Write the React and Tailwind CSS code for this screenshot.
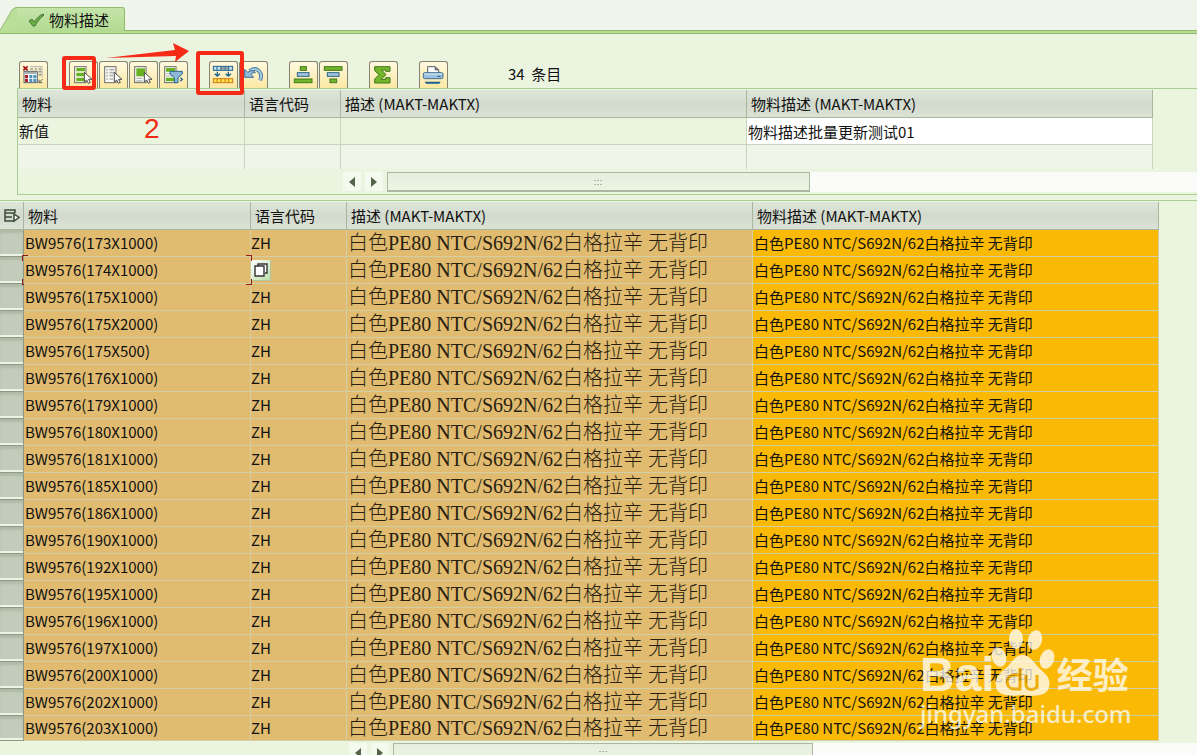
import React from "react";

const CODES = [
  "173X1000", "174X1000", "175X1000", "175X2000", "175X500", "176X1000", "179X1000",
  "180X1000", "181X1000", "185X1000", "186X1000", "190X1000", "192X1000", "195X1000",
  "196X1000", "197X1000", "200X1000", "202X1000", "203X1000",
];
const DESCRIPTION = "白色PE80 NTC/S692N/62白格拉辛 无背印";

function Pointer() {
  return <path d="M46 34v29l7-6 5 10 6-3-5-9h10z" fill="#fff" stroke="#4d4d4d" strokeWidth="3" />;
}

function Sheet() {
  return <rect x="17" y="17" width="34" height="48" fill="#fbfbf8" stroke="#6d6d66" strokeWidth="3" />;
}

function LayoutIcon() {
  return (
    <>
      <path d="M34 17h35v32" fill="none" stroke="#b3b3ac" strokeWidth="3" />
      <path d="M34 24h8m5 0h7m5 0h7M59 32h8m-8 9h8" stroke="#96968f" strokeWidth="5" />
      <path d="M13 16l13 12m0-12L13 28" stroke="#a51218" strokeWidth="5" />
      <rect x="15" y="31" width="40" height="34" fill="#fff" stroke="#5d6468" strokeWidth="3" />
      <path d="M17 36h36" stroke="#a3adb2" strokeWidth="6" />
      <path d="M18 42h9v9h-9zm0 11h9v10h-9z" fill="#ad2027" />
      <path d="M31 42h9v9h-9zm0 11h9v10h-9zM43 42h9v9h-9zm0 11h9v10h-9z" fill="#4d91bd" />
      <path d="M71 54L60 65m0-9v9h10" fill="none" stroke="#5b5f5c" strokeWidth="3" />
    </>
  );
}

function SelectAllIcon() {
  return (
    <>
      <Sheet />
      <path d="M22 21h26v10H22zm0 14h26v11H22zm0 15h26v11H22z" fill="#68b221" />
      <Pointer />
    </>
  );
}

function DeselectIcon() {
  return (
    <>
      <Sheet />
      <path d="M22 26h5m4 0h16M22 35h5m4 0h16M22 44h5m4 0h12M22 54h5m4 0h12" stroke="#b2b4ae" strokeWidth="5" />
      <Pointer />
    </>
  );
}

function SelectBlockIcon() {
  return (
    <>
      <Sheet />
      <path d="M22 22h26v24H22z" fill="#68b221" />
      <path d="M22 52h18m-18 8h18" stroke="#b2b4ae" strokeWidth="4" />
      <Pointer />
    </>
  );
}

function FilterIcon() {
  return (
    <>
      <Sheet />
      <path d="M21 21h27v11H21zm0 29h27v11H21z" fill="#68b221" />
      <path d="M20 38h20m-20 7h20" stroke="#b2b4ae" strokeWidth="3" />
      <path d="M33 31h37v8L57 50v15H46V50L33 39z" fill="#8fb9d8" stroke="#286690" strokeWidth="3" />
      <path d="M64 50l6 5-6 6" fill="none" stroke="#286690" strokeWidth="4" />
    </>
  );
}

function MassChangeIcon() {
  return (
    <>
      <rect x="13" y="16" width="58" height="12" fill="#bcdcf0" stroke="#25648f" strokeWidth="3" />
      <path d="M35 18h10v8H35zm12 0h10v8H47z" fill="#9a9d9c" />
      <path d="M24 16v12m12-12v12m12-12v12m11-12v12" stroke="#25648f" strokeWidth="3" />
      <path d="M25 32v12m-8-6l8 7 8-7M58 32v12m-8-6l8 7 8-7" fill="none" stroke="#1d638f" strokeWidth="4" />
      <rect x="13" y="53" width="58" height="12" fill="#ffe34d" stroke="#cf7715" strokeWidth="3" />
      <path d="M24 53v12m12-12v12m12-12v12m11-12v12" stroke="#cf7715" strokeWidth="3" />
    </>
  );
}

function UndoIcon() {
  return (
    <>
      <path d="M32 30c20-16 42 5 31 28" fill="none" stroke="#3c7195" strokeWidth="11" />
      <path d="M32 30c20-16 42 5 31 28" fill="none" stroke="#a6cbe5" strokeWidth="6" />
      <path d="M17 25v24h27l-8-9c4-4 8-6 13-5-3-7-13-8-23-1z" fill="#91bad8" stroke="#3c7195" strokeWidth="3" />
    </>
  );
}

function SortAscendingIcon() {
  return (
    <g strokeWidth="3">
      <rect x="34" y="17" width="18" height="11" fill="#75b52b" stroke="#3e781d" />
      <rect x="25" y="35" width="35" height="11" fill="#9fc6df" stroke="#2d6383" />
      <rect x="16" y="54" width="53" height="11" fill="#75b52b" stroke="#3e781d" />
    </g>
  );
}

function SortDescendingIcon() {
  return (
    <g strokeWidth="3">
      <rect x="16" y="17" width="53" height="11" fill="#75b52b" stroke="#3e781d" />
      <rect x="25" y="35" width="35" height="11" fill="#9fc6df" stroke="#2d6383" />
      <rect x="33" y="54" width="20" height="11" fill="#75b52b" stroke="#3e781d" />
    </g>
  );
}

function SumIcon() {
  return (
    <path
      d="M17 17h46v14H50v-4H38l13 14-15 14h14v-5h13v16H17V54l13-13-13-12z"
      fill="#75b52b" stroke="#3e781d" strokeWidth="3"
    />
  );
}

function PrintIcon() {
  return (
    <>
      <path d="M26 38V17h22l11 9v12" fill="#fff" stroke="#535c61" strokeWidth="3" />
      <path d="M48 17v10h11" fill="#767b7c" stroke="#535c61" strokeWidth="2" />
      <rect x="13" y="35" width="59" height="18" rx="4" fill="#9dc2df" stroke="#427090" strokeWidth="3" />
      <path d="M16 39h53" stroke="#d7e9f5" strokeWidth="3" />
      <path d="M55 46h10" stroke="#265d85" strokeWidth="3" />
      <path d="M17 62h48l-4 6H21z" fill="#165f90" />
    </>
  );
}

const TOOL_GROUPS = [
  [["布局", LayoutIcon]],
  [["全选", SelectAllIcon], ["取消全选", DeselectIcon], ["选择块", SelectBlockIcon], ["过滤", FilterIcon]],
  [["执行批量更改", MassChangeIcon], ["撤销", UndoIcon]],
  [["升序", SortAscendingIcon], ["降序", SortDescendingIcon]],
  [["总计", SumIcon]],
  [["打印", PrintIcon]],
];

function ToolButton({ label, Icon }) {
  return (
    <button
      type="button"
      aria-label={label}
      className="h-[27px] w-[29px] rounded-t-[3px] border border-b-0 border-[#85826f] bg-linear-to-b from-[#fff9df] to-[#fbe8a2]"
    >
      <svg viewBox="3 3 87 81" className="block h-[27px] w-[29px]"><Icon /></svg>
    </button>
  );
}

function Toolbar() {
  return (
    <div className="relative z-10 flex h-[54px] shrink-0 items-end pl-[19px]">
      <div className="flex gap-[21px]">
        {TOOL_GROUPS.map((group, i) => (
          <div key={i} className="flex gap-px">
            {group.map(([label, Icon]) => <ToolButton key={label} label={label} Icon={Icon} />)}
          </div>
        ))}
      </div>
      <span className="ml-[60px] h-[26px] leading-6">34&nbsp; 条目</span>
      <svg viewBox="0 0 84 22" className="absolute top-2 left-[105px] h-[22px] w-[84px]">
        <path d="M1 16L70 8 68 1l16 8-14 11 1-6-35 1z" fill="#f52a17" />
      </svg>
      <span className="absolute top-[22px] left-[62px] h-[34px] w-[34px] rounded-[3px] border-4 border-[#f52a17]" />
      <span className="absolute top-[17px] left-[196px] h-11 w-12 rounded-[3px] border-4 border-[#f52a17]" />
    </div>
  );
}

function HeadCell({ children }) {
  return (
    <th className="h-7 border-r border-b border-[#a9b59f] bg-linear-to-b from-[#dfe6da] via-[#d2d9cd] to-[#dbe3d5] px-1 py-0 text-left font-normal whitespace-nowrap">
      {children}
    </th>
  );
}

function Columns() {
  return (
    <>
      <col className="w-24" />
      <col className="w-[406px]" />
      <col className="w-[406px]" />
    </>
  );
}

function Scrollbar({ className, thumb }) {
  return (
    <div className={className}>
      <button type="button" aria-label="向左滚动" className="grid h-[19px] w-[18px] shrink-0 place-items-center bg-[#f5faef]">
        <svg viewBox="0 0 6 10" className="h-2.5 w-1.5"><path d="M6 0v10L0 5z" fill="#536449" /></svg>
      </button>
      <button type="button" aria-label="向右滚动" className="ml-1 grid h-[19px] w-[18px] shrink-0 place-items-center bg-[#f5faef]">
        <svg viewBox="0 0 6 10" className="h-2.5 w-1.5"><path d="M0 0v10l6-5z" fill="#536449" /></svg>
      </button>
      <div className="ml-1 flex h-5 flex-1 bg-[#fbfcfa]">
        <div className={thumb}>
          <svg viewBox="0 0 9 6" className="h-1.5 w-[9px]" fill="#acb8a2">
            <path d="M0 1h2v1H0zm3 0h2v1H3zm3 0h2v1H6zM0 5h2v1H0zm3 0h2v1H3zm3 0h2v1H6z" />
          </svg>
        </div>
      </div>
    </div>
  );
}

function ChangePanel() {
  const cell = "h-[27px] border-r border-b border-[#c8d4bc] p-0";
  const blank = "h-6 border-r border-[#c8d4bc] bg-[#eff5e9] p-0";
  return (
    <section className="relative ml-[17px] shrink-0 border-y border-l border-[#a8ce91] pt-px">
      <table className="w-[1135px] table-fixed border-separate border-spacing-0">
        <colgroup><col className="w-[227px]" /><Columns /></colgroup>
        <thead>
          <tr>
            <HeadCell>物料</HeadCell>
            <HeadCell>语言代码</HeadCell>
            <HeadCell>描述 (MAKT-MAKTX)</HeadCell>
            <HeadCell>物料描述 (MAKT-MAKTX)</HeadCell>
          </tr>
        </thead>
        <tbody>
          <tr>
            <td className={cell}><span className="pl-px">新值</span></td>
            <td className={cell} />
            <td className={cell} />
            <td className={cell}>
              <input aria-label="物料描述新值" defaultValue="物料描述批量更新测试01" className="block h-[26px] w-full bg-white px-px outline-none" />
            </td>
          </tr>
          <tr>
            <td className={blank} /><td className={blank} /><td className={blank} /><td className={blank} />
          </tr>
        </tbody>
      </table>
      <Scrollbar
        className="mb-0.5 flex pt-[3px] pl-[325px]"
        thumb="flex w-[423px] items-center justify-center border border-b-2 border-[#abb7a1] bg-linear-to-b from-[#e6eede] to-[#ecf5e3]"
      />
      <span className="absolute top-6 left-[126px] font-['Liberation_Sans',sans-serif] text-[28px] leading-8 text-[#ee2b14]">2</span>
    </section>
  );
}

function ValueHelp() {
  return (
    <button type="button" aria-label="值帮助" className="grid h-[21px] w-5 place-items-center border-r border-b border-[#b2c39f] bg-linear-to-br from-white to-[#bddfaa]">
      <svg viewBox="0 0 14 14" className="h-3.5 w-3.5" fill="#fff" stroke="#343434" strokeWidth="1.4">
        <path d="M4 3V1h9v9h-2" /><path d="M1 3h9v10H1z" />
      </svg>
    </button>
  );
}

function FocusCorners() {
  return (
    <>
      <span className="absolute -top-0.5 -left-0.5 h-1.5 w-1.5 border-t border-l border-[#941d12]" />
      <span className="absolute -bottom-0.5 -left-0.5 h-1.5 w-1.5 border-b border-l border-[#941d12]" />
      <span className="absolute -top-0.5 -right-0.5 h-1.5 w-1.5 border-t border-r border-[#941d12]" />
      <span className="absolute -right-0.5 -bottom-0.5 z-10 h-1.5 w-1.5 border-r border-b border-[#941d12]" />
    </>
  );
}

function MaterialRow({ code, focused, last }) {
  const size = last ? "h-[25px]" : "h-[27px]";
  const base = `border-r border-b border-[#d2cfa5] py-0 whitespace-nowrap ${size}`;
  const tan = `${base} bg-[#e0bb70]`;
  return (
    <tr>
      <td className={`border-r border-b border-[#8c9b84] bg-[#c3ccba] p-0 shadow-[inset_0_-2px_0_#edf3e7,inset_0_3px_2px_#b0bba7] ${size}`} />
      <td className={`relative px-px ${tan}`}>
        BW9576({code})
        {focused && <FocusCorners />}
      </td>
      <td className={`px-0 ${tan}`}>{focused ? <ValueHelp /> : "ZH"}</td>
      <td className={`px-px ${tan} font-['Liberation_Serif','Noto_Sans_CJK_SC',serif] text-xl leading-6 font-light text-[#291f10]`}>{DESCRIPTION}</td>
      <td className={`px-px ${base} bg-[#fab905]`}>{DESCRIPTION}</td>
    </tr>
  );
}

function MaterialTable() {
  return (
    <table className="w-[1159px] table-fixed border-separate border-spacing-0">
      <colgroup><col className="w-6" /><col className="w-[227px]" /><Columns /></colgroup>
      <thead>
        <tr>
          <HeadCell>
            <button type="button" aria-label="选择所有行" className="block">
              <svg viewBox="0 0 16 14" className="h-3.5 w-4" fill="none" stroke="#3c4d39" strokeWidth="1.5">
                <path d="M11 4V1H1v11h9M1 4h10M1 8h7" /><path d="M10 5v7l5-3.500z" fill="#fff" />
              </svg>
            </button>
          </HeadCell>
          <HeadCell>物料</HeadCell>
          <HeadCell>语言代码</HeadCell>
          <HeadCell>描述 (MAKT-MAKTX)</HeadCell>
          <HeadCell>物料描述 (MAKT-MAKTX)</HeadCell>
        </tr>
      </thead>
      <tbody>
        {CODES.map((code, i) => (
          <MaterialRow key={code} code={code} focused={i === 1} last={i === CODES.length - 1} />
        ))}
      </tbody>
    </table>
  );
}

function Watermark() {
  return (
    <div className="pointer-events-none absolute right-[60px] bottom-6 w-[217px] text-white opacity-75">
      <div className="flex h-[72px] items-end">
        <span className="font-['Liberation_Sans',sans-serif] text-5xl leading-[44px] font-bold">Bai</span>
        <svg viewBox="0 0 64 72" className="-ml-1 h-[72px] w-16 shrink-0" fill="#fff">
          <ellipse cx="8" cy="32" rx="7" ry="10" transform="rotate(-18 8 32)" />
          <ellipse cx="25" cy="14" rx="7" ry="10" />
          <ellipse cx="44" cy="15" rx="7" ry="10" transform="rotate(14 44 15)" />
          <ellipse cx="56" cy="34" rx="7" ry="10" transform="rotate(18 56 34)" />
          <path d="M31 30c8 0 12 8 18 14 7 6 11 10 9 18-2 8-10 10-27 8-15 2-24 0-26-8-2-8 3-13 9-18 7-6 10-14 17-14z" />
          <path d="M29 43v21h-6c-9 0-9-14 0-14h6m6 0v10c0 6 11 6 11 0V50v14" fill="none" stroke="#eda907" strokeWidth="3" />
        </svg>
        <span className="ml-0.5 text-4xl leading-[48px] font-bold">经验</span>
      </div>
      <div className="font-['Noto_Sans',sans-serif] text-2xl leading-[34px] font-medium">jingyan.baidu.com</div>
    </div>
  );
}

export default function App() {
  return (
    <main className="relative flex h-screen flex-col overflow-hidden bg-[#ebf4df] font-['Noto_Sans_CJK_SC',sans-serif] text-[15px] leading-5 text-[#111]">
      <header className="flex h-[34px] shrink-0 items-end border-b border-[#91ba70] bg-[#eff5ea]">
        <div className="flex h-[26px] w-full items-start border-b-2 border-[#b5dc93]">
          <svg viewBox="0 0 17 24" className="h-6 w-[17px]">
            <path d="M0 24L12 3q2-3 5-3v24z" fill="#b9df99" /><path d="M0 23.500L12 3q2-2.500 5-2.500" fill="none" stroke="#91ba70" />
          </svg>
          <button type="button" className="flex h-6 items-center rounded-tr-[3px] border-t border-r border-[#91ba70] bg-linear-to-b from-[#c4e4aa] to-[#b3db91] pr-[15px] pl-[11px]">
            <svg viewBox="0 0 16 14" className="mr-[5px] h-3.5 w-4">
              <path d="M1 8l3-2 2 3C9 5 12 2 15 1l1 1c-4 3-7 7-9 11H5z" fill="#68b43b" stroke="#4c6f42" />
            </svg>
            物料描述
          </button>
          <span className="h-6 flex-1 border-b border-[#91ba70]" />
        </div>
      </header>
      <Toolbar />
      <ChangePanel />
      <section className="mt-[5px] shrink-0 border-t border-[#a8ce91] pt-px">
        <MaterialTable />
        <Scrollbar
          className="mt-0.5 flex pl-[349px]"
          thumb="flex w-[420px] items-center justify-center border border-b-2 border-[#abb7a1] bg-linear-to-b from-[#e6eede] to-[#ecf5e3]"
        />
      </section>
      <Watermark />
    </main>
  );
}
